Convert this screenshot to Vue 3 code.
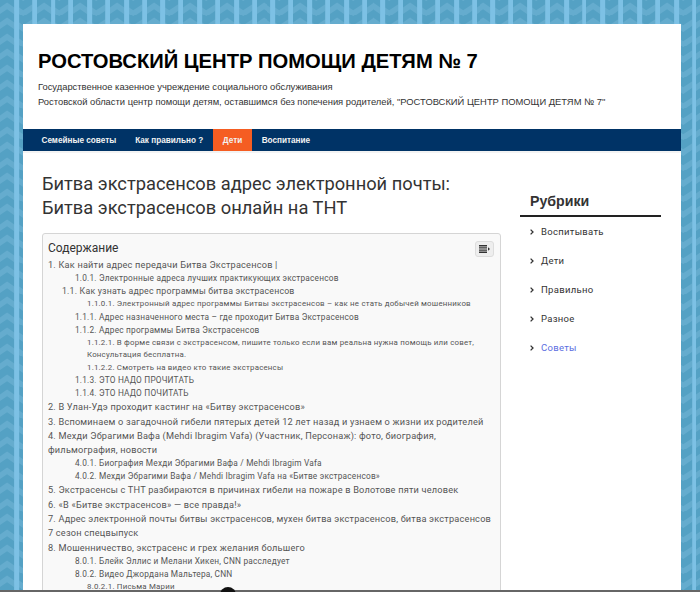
<script setup>
const nav = [
  { label: 'Семейные советы' },
  { label: 'Как правильно ?' },
  { label: 'Дети', active: true },
  { label: 'Воспитание' }
]
const toc = [
  { d: 0, t: '1. Как найти адрес передачи Битва Экстрасенсов |' },
  { d: 2, t: '1.0.1. Электронные адреса лучших практикующих экстрасенсов' },
  { d: 1, t: '1.1. Как узнать адрес программы битва экстрасенсов' },
  { d: 3, t: '1.1.0.1. Электронный адрес программы Битвы экстрасенсов – как не стать добычей мошенников' },
  { d: 2, t: '1.1.1. Адрес назначенного места – где проходит Битва Экстрасенсов' },
  { d: 2, t: '1.1.2. Адрес программы Битва Экстрасенсов' },
  { d: 3, t: '1.1.2.1. В форме связи с экстрасенсом, пишите только если вам реальна нужна помощь или совет, Консультация бесплатна.' },
  { d: 3, t: '1.1.2.2. Смотреть на видео кто такие экстрасенсы' },
  { d: 2, t: '1.1.3. ЭТО НАДО ПРОЧИТАТЬ' },
  { d: 2, t: '1.1.4. ЭТО НАДО ПОЧИТАТЬ' },
  { d: 0, t: '2. В Улан-Удэ проходит кастинг на «Битву экстрасенсов»' },
  { d: 0, t: '3. Вспоминаем о загадочной гибели пятерых детей 12 лет назад и узнаем о жизни их родителей' },
  { d: 0, t: '4. Мехди Эбрагими Вафа (Mehdi Ibragim Vafa) (Участник, Персонаж): фото, биография, фильмография, новости' },
  { d: 2, t: '4.0.1. Биография Мехди Эбрагими Вафа /  Mehdi Ibragim Vafa' },
  { d: 2, t: '4.0.2. Мехди Эбрагими Вафа /  Mehdi Ibragim Vafa на «Битве экстрасенсов»' },
  { d: 0, t: '5. Экстрасенсы с ТНТ разбираются в причинах гибели на пожаре в Волотове пяти человек' },
  { d: 0, t: '6. «В «Битве экстрасенсов» — все правда!»' },
  { d: 0, t: '7. Адрес электронной почты битвы экстрасенсов, мухен битва экстрасенсов, битва экстрасенсов 7 сезон спецвыпуск' },
  { d: 0, t: '8. Мошенничество, экстрасенс и грех желания большего' },
  { d: 2, t: '8.0.1. Блейк Эллис и Мелани Хикен, CNN расследует' },
  { d: 2, t: '8.0.2. Видео Джордана Мальтера, CNN' },
  { d: 3, t: '8.0.2.1. Письма Марии' }
]
const cats = [
  { t: 'Воспитывать' },
  { t: 'Дети' },
  { t: 'Правильно' },
  { t: 'Разное' },
  { t: 'Советы', link: true }
]
</script>

<template>
  <div class="page">
    <div class="wrap">
      <header class="head">
        <h1 class="site">РОСТОВСКИЙ ЦЕНТР ПОМОЩИ ДЕТЯМ № 7</h1>
        <p class="desc">Государственное казенное учреждение социального обслуживания</p>
        <p class="desc">Ростовской области центр помощи детям, оставшимся без попечения родителей, "РОСТОВСКИЙ ЦЕНТР ПОМОЩИ ДЕТЯМ № 7"</p>
      </header>
      <nav class="nav">
        <a v-for="n in nav" :key="n.label" class="nav-item" :class="{ active: n.active }">{{ n.label }}</a>
      </nav>
      <div class="columns">
        <main class="main">
          <h2 class="title">Битва экстрасенсов адрес электронной почты: Битва экстрасенсов онлайн на ТНТ</h2>
          <section class="toc">
            <button class="toc-btn" aria-label="toggle">
              <svg width="11" height="8" viewBox="0 0 11 8">
                <path d="M0 0h8v1.4H0zM0 2.2h8v1.4H0zM0 4.4h8v1.4H0zM0 6.6h8V8H0z" fill="#333" />
                <path d="M9 2.2l2 1.8-2 1.8z" fill="#333" />
              </svg>
            </button>
            <div class="toc-title">Содержание</div>
            <div v-for="i in toc" :key="i.t" class="toc-item" :class="'d' + i.d">{{ i.t }}</div>
          </section>
        </main>
        <aside class="side">
          <h3 class="side-title">Рубрики</h3>
          <ul class="cats">
            <li v-for="c in cats" :key="c.t" class="cat" :class="{ link: c.link }">
              <svg class="chev" width="4" height="6" viewBox="0 0 4 6"><path d="M.6.6L3 3 .6 5.4" fill="none" stroke="#333" stroke-width="1.3" /></svg>
              <span>{{ c.t }}</span>
            </li>
          </ul>
        </aside>
      </div>
    </div>
    <div class="bottom-line"></div>
    <div class="bottom-dot"></div>
  </div>
</template>

<style>
html, body { margin: 0; height: 592px; overflow: hidden; }
</style>

<style scoped>
.page {
  position: relative;
  height: 592px;
  overflow: hidden;
  box-sizing: border-box;
  padding: 24px 19px 0 23px;
  background-color: #66add0;
  background-image: url("data:image/svg+xml,%3Csvg xmlns='http://www.w3.org/2000/svg' width='36.67' height='15.5'%3E%3Crect width='36.67' height='15.5' fill='%2365acce'/%3E%3Cpath fill='%2354a1c4' d='M-2 15L7 9 16 15V24L7 18-2 24zM-2-.5L7-6.5 16-.5V8.5L7 2.5-2 8.5zM14-5L23 1 32-5V4L23 10 14 4zM14 10.5L23 16.5 32 10.5V19.5L23 25.5 14 19.5z'/%3E%3Crect x='14' width='5' height='15.5' fill='%237dc1e5'/%3E%3Crect x='32' width='5' height='15.5' fill='%237dc1e5'/%3E%3C/svg%3E");
  background-size: 36.67px 15.5px;
  font-family: Roboto, "Liberation Sans", sans-serif;
}
.wrap {
  background: #fff;
  height: 100%;
}
.head {
  padding: 23px 15px 0;
  height: 105px;
  box-sizing: border-box;
  font-family: "Liberation Sans", Arial, sans-serif;
}
.site {
  margin: 0 0 4px;
  font-size: 20.2px;
  line-height: 28px;
  font-weight: 700;
  color: #000;
}
.desc {
  margin: 0;
  font-size: 9.4px;
  line-height: 15px;
  color: #333;
}
.nav {
  display: flex;
  height: 22px;
  padding-left: 9px;
  background: #003366;
  box-shadow: 0 2px 0 #f3f3f3;
  font-family: "Liberation Sans", Arial, sans-serif;
}
.nav-item {
  padding: 0 9.5px;
  font-size: 8.2px;
  line-height: 23px;
  font-weight: 700;
  color: #f2f2f2;
}
.nav-item.active {
  padding: 0 10px;
  background: #f55d22;
}
.columns {
  display: flex;
  padding: 21px 19px 0;
}
.main {
  width: 459px;
  flex: none;
}
.title {
  margin: 0 0 13px;
  padding-right: 30px;
  font-size: 18.3px;
  line-height: 24px;
  font-weight: 400;
  color: #333;
}
.toc {
  position: relative;
  box-sizing: border-box;
  height: 400px;
  padding: 7px 3px 0 5px;
  background: #f9f9f9;
  border: 1px solid #d5d5d5;
  border-radius: 3px;
}
.toc-btn {
  position: absolute;
  top: 7px;
  right: 6px;
  width: 19px;
  height: 16px;
  padding: 0;
  display: flex;
  align-items: center;
  justify-content: center;
  background: #eee;
  border: 1px solid #ddd;
  border-radius: 3px;
}
.toc-title {
  margin-bottom: 3px;
  font-size: 12px;
  line-height: 14px;
  color: #333;
}
.toc-item {
  color: #555;
  letter-spacing: .2px;
}
.d0 { font-size: 9.2px; line-height: 14.3px; }
.d1 { font-size: 8.75px; line-height: 13px; padding-left: 14px; }
.d2 { font-size: 8.3px; line-height: 13px; padding-left: 27px; }
.d3 { font-size: 7.9px; line-height: 12.5px; padding-left: 39px; padding-right: 20px; }
.side {
  margin-left: 19px;
  width: 141px;
  flex: none;
}
.side-title {
  margin: 20px 0 0;
  padding: 0 0 5px 10px;
  border-bottom: 2px solid #222;
  font-family: "Liberation Sans", Arial, sans-serif;
  font-size: 14.2px;
  line-height: 18px;
  font-weight: 700;
  color: #333;
}
.cats {
  margin: 0;
  padding: 0;
  list-style: none;
}
.cat {
  display: flex;
  align-items: center;
  gap: 7px;
  height: 29px;
  padding-left: 10px;
  font-size: 9.5px;
  letter-spacing: .3px;
  color: #333;
}
.cat.link {
  color: #5b6ee1;
}
.bottom-line {
  position: absolute;
  left: 0;
  right: 0;
  bottom: 0;
  height: 2px;
  background: #666;
}
.bottom-dot {
  position: absolute;
  left: 220px;
  bottom: -11px;
  width: 16px;
  height: 16px;
  border-radius: 50%;
  background: #111;
}
</style>
